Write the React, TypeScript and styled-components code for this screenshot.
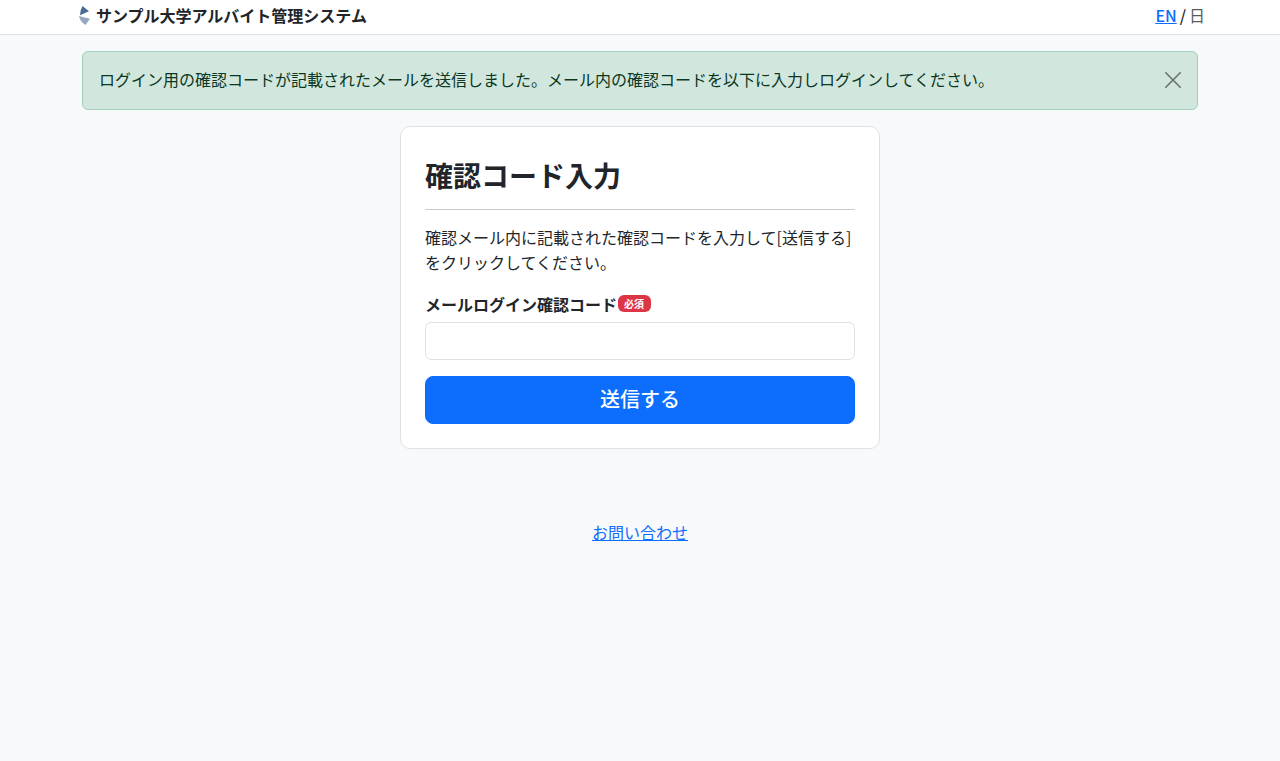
import React, { useState } from "react";
import styled, { createGlobalStyle } from "styled-components";

const GlobalStyle = createGlobalStyle`
  *, *::before, *::after { box-sizing: border-box; }
  body {
    margin: 0;
    background: #f8f9fb;
    color: #212529;
    font-family: "Noto Sans CJK JP", sans-serif;
    font-size: 16px;
    line-height: 24px;
  }
`;

const Header = styled.header`
  background: #fff;
  border-bottom: 1px solid #dee2e6;
`;

const HeaderInner = styled.div`
  display: flex;
  align-items: center;
  justify-content: space-between;
  max-width: 1140px;
  margin: 0 auto;
  padding: 3px 5px 7px 9px;
`;

const Brand = styled.div`
  display: flex;
  align-items: center;
  gap: 5px;
  font-weight: 700;
`;

const Languages = styled.nav`
  display: flex;
  gap: 3px;
  font-weight: 500;
`;

const CurrentLanguage = styled.span`
  color: #595c5f;
  font-weight: 400;
`;

const Link = styled.a`
  color: #0d6efd;
  text-decoration: underline;
`;

const Container = styled.main`
  max-width: 1140px;
  margin: 0 auto;
  padding: 16px 12px;
`;

const Alert = styled.div`
  display: flex;
  align-items: center;
  justify-content: space-between;
  margin-bottom: 16px;
  padding: 15px 16px 16px;
  background: #d1e7dd;
  border: 1px solid #a3cfbb;
  border-radius: 6px;
  color: #0a3622;
`;

const AlertText = styled.p`
  margin: 0;
  padding-bottom: 2px;
`;

const CloseButton = styled.button`
  display: flex;
  padding: 0;
  border: 0;
  background: none;
  color: #000;
  opacity: 0.5;
  cursor: pointer;
`;

const Card = styled.section`
  max-width: 480px;
  margin: 0 auto;
  padding: 24px;
  background: #fff;
  border: 1px solid #dee2e6;
  border-radius: 10px;
`;

const Title = styled.h1`
  margin: 0 0 15px;
  padding: 7px 0 17px;
  border-bottom: 1px solid #c8c9ca;
  font-size: 28px;
  line-height: 34px;
  font-weight: 700;
`;

const Lead = styled.p`
  margin: 0 0 17px;
  line-height: 25px;
`;

const Form = styled.form`
  display: flex;
  flex-direction: column;
`;

const Label = styled.label`
  display: flex;
  align-items: flex-start;
  gap: 1px;
  margin-bottom: 6px;
  font-weight: 700;
`;

const Badge = styled.span`
  margin-top: 3px;
  padding: 0 7px 0 6px;
  background: #dc3545;
  border-radius: 6px;
  color: #fff;
  font-size: 10px;
  line-height: 17px;
  font-weight: 700;
`;

const Input = styled.input`
  width: 100%;
  height: 38px;
  margin: 0 0 16px;
  padding: 6px 12px;
  background: #fff;
  border: 1px solid #dee2e6;
  border-radius: 6px;
  color: inherit;
  font: inherit;
`;

const SubmitButton = styled.button`
  height: 48px;
  padding: 7px 16px 9px;
  background: #0d6efd;
  border: 1px solid #0d6efd;
  border-radius: 8px;
  color: #fff;
  font: inherit;
  font-size: 20px;
  font-weight: 500;
  line-height: 30px;
  cursor: pointer;
`;

const Footer = styled.footer`
  padding: 55px 12px 24px;
  text-align: center;
`;

const BrandMark = () => (
  <svg width="12" height="22" viewBox="0 -2 12 22" aria-hidden="true">
    <path d="M3.5 0 L10 5.2 L1 9.3 Q1 4 3.5 0Z" fill="#486a93" />
    <path d="M0 10 L11 12.8 L6.5 19 Q1 15.5 0 10Z" fill="#94a8bf" />
  </svg>
);

const CloseIcon = () => (
  <svg
    width="16"
    height="16"
    viewBox="0 0 16 16"
    fill="none"
    stroke="currentColor"
    strokeWidth="1.6"
    strokeLinecap="round"
    aria-hidden="true"
  >
    <path d="M.8 .8 15.2 15.2M15.2 .8 .8 15.2" />
  </svg>
);

export default function App() {
  const [alertOpen, setAlertOpen] = useState(true);
  const [code, setCode] = useState("");

  return (
    <>
      <GlobalStyle />
      <Header>
        <HeaderInner>
          <Brand>
            <BrandMark />
            サンプル大学アルバイト管理システム
          </Brand>
          <Languages>
            <Link href="#en">EN</Link>
            <span>/</span>
            <CurrentLanguage>日</CurrentLanguage>
          </Languages>
        </HeaderInner>
      </Header>
      <Container>
        {alertOpen && (
          <Alert role="alert">
            <AlertText>
              ログイン用の確認コードが記載されたメールを送信しました。メール内の確認コードを以下に入力しログインしてください。
            </AlertText>
            <CloseButton type="button" aria-label="閉じる" onClick={() => setAlertOpen(false)}>
              <CloseIcon />
            </CloseButton>
          </Alert>
        )}
        <Card>
          <Title>確認コード入力</Title>
          <Lead>確認メール内に記載された確認コードを入力して[送信する]をクリックしてください。</Lead>
          <Form onSubmit={(event) => event.preventDefault()}>
            <Label htmlFor="code">
              メールログイン確認コード
              <Badge>必須</Badge>
            </Label>
            <Input
              id="code"
              type="text"
              required
              value={code}
              onChange={(event) => setCode(event.target.value)}
            />
            <SubmitButton type="submit">送信する</SubmitButton>
          </Form>
        </Card>
      </Container>
      <Footer>
        <Link href="#contact">お問い合わせ</Link>
      </Footer>
    </>
  );
}
